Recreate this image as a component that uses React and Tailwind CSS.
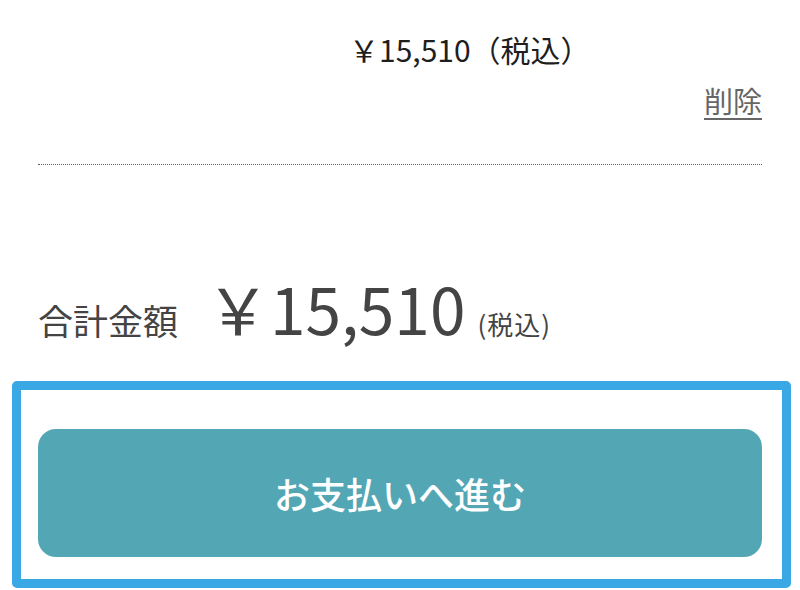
export default function App() {
  return (
    <div
      className="w-[800px] h-[590px] bg-white overflow-hidden flex flex-col"
      style={{ fontFamily: '"Noto Sans CJK JP", "Noto Sans", sans-serif' }}
    >
      <div className="px-[38px] flex flex-col">
        <div className="mt-[29px] pl-[311px] text-[30px] leading-[40px] text-[#1e1e1e] whitespace-nowrap">
          ￥15,510（税込）
        </div>
        <div className="mt-[13px] flex justify-end">
          <span className="text-[29px] leading-[36px] text-[#666] underline underline-offset-[5px]">
            削除
          </span>
        </div>
        <div className="mt-[46px] border-t border-dotted border-[#666]" />
        <div className="mt-[110px] flex items-baseline text-[#444] whitespace-nowrap">
          <span className="text-[35px] leading-none">合計金額</span>
          <span className="ml-[28px] text-[64px] leading-none">￥15,510</span>
          <span className="ml-[12px] text-[26px] leading-none tracking-[1px]">(税込)</span>
        </div>
      </div>
      <div className="mt-[42px] ml-[12px] mr-[9px] h-[207px] border-[9px] border-[#3aa8e4] rounded-[5px] flex flex-col">
        <button className="mt-[39px] ml-[17px] mr-[20px] h-[128px] rounded-[18px] bg-[#53a7b5] text-white text-[36px] font-medium flex items-center justify-center">
          お支払いへ進む
        </button>
      </div>
    </div>
  );
}
